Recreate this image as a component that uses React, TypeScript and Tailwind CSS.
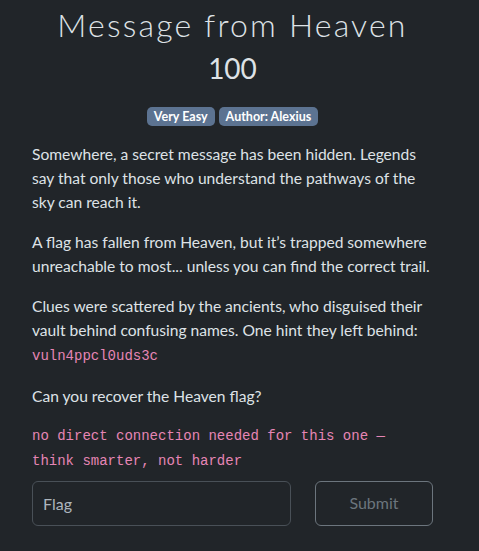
export default function App() {
  return (
    <div className="min-h-screen w-full bg-[#212529] text-[#dee2e6] font-['Lato','Noto_Sans',sans-serif]">
      <div className="ml-8 w-[401px] pt-[6px]">
        <h2 className="text-center text-[32px] leading-[1.2] tracking-[2.2px] font-light">
          Message from Heaven
        </h2>
        <h3 className="mt-[8px] text-center text-[28px] leading-[1.2]">100</h3>

        <div className="mt-[21px] flex justify-center gap-1">
          <span className="rounded-[5px] bg-[#5c7391] px-[7px] py-[3px] text-[12.5px] font-bold leading-[13px] text-white">
            Very Easy
          </span>
          <span className="rounded-[5px] bg-[#5c7391] px-[7px] py-[3px] text-[12.5px] font-bold leading-[13px] text-white">
            Author: Alexius
          </span>
        </div>

        <div className="mt-[16px] text-[15.6px] leading-6">
          <p className="mb-4">
            Somewhere, a secret message has been hidden. Legends say that only those who understand the pathways of
            the sky can reach it.
          </p>
          <p className="mb-4">
            A flag has fallen from Heaven, but it’s trapped somewhere unreachable to most... unless you can find the
            correct trail.
          </p>
          <p className="mb-4">
            Clues were scattered by the ancients, who disguised their vault behind confusing names. One hint they left
            behind:
            <br />
            <code className="font-['Liberation_Mono',monospace] text-[14px] text-[#e685b5]">vuln4ppcl0uds3c</code>
          </p>
          <p className="mb-4">Can you recover the Heaven flag?</p>
          <p className="font-['Liberation_Mono',monospace] text-[14px] leading-[25px] text-[#e685b5]">
            no direct connection needed for this one —
            <br />
            think smarter, not harder
          </p>
        </div>

        <form className="mt-[7px] flex gap-6">
          <input
            type="text"
            placeholder="Flag"
            className="h-[45px] w-[259px] rounded-[6px] border border-[#495057] bg-[#212529] px-[10px] text-[16px] text-[#dee2e6] outline-none placeholder:text-[#adb5bd]"
          />
          <button
            type="button"
            disabled
            className="h-[45px] w-[118px] rounded-[6px] border border-[#6c757d] text-[16px] text-[#6c757d]"
          >
            Submit
          </button>
        </form>
      </div>
    </div>
  );
}
